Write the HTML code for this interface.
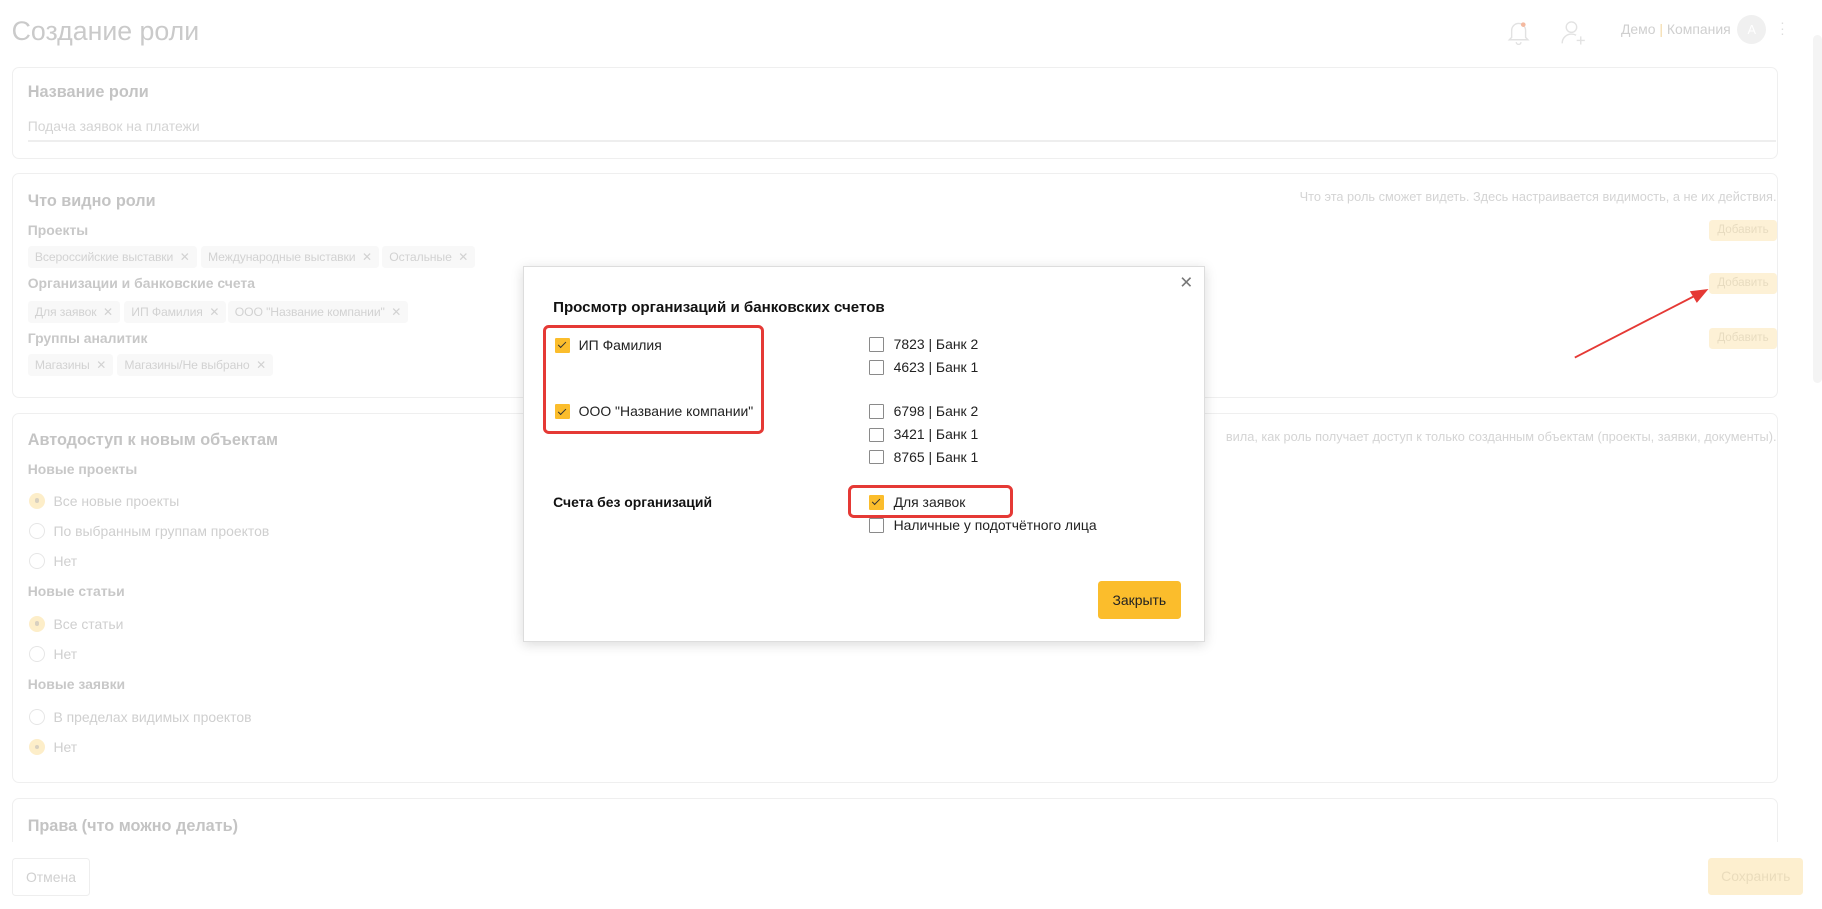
<!DOCTYPE html>
<html><head><meta charset="utf-8"><style>
html,body{margin:0;padding:0;background:#fff;overflow:hidden}
body{width:1822px;height:909px}
#w{position:absolute;left:0;top:0;width:1568px;height:782px;zoom:1.16199;font-family:"Liberation Sans",sans-serif;color:#ccc;overflow:hidden}
.a{position:absolute;white-space:nowrap}
.card{position:absolute;left:10px;width:1518px;border:1px solid #efefef;border-radius:6px;background:#fff}
.h{font-weight:bold;font-size:14px;color:#c4c4c4}
.s{font-weight:bold;font-size:12px;color:#c8c8c8}
.chip{position:absolute;height:19px;background:#f8f8f8;border-radius:3px;font-size:10.5px;line-height:19px;color:#d2d2d2;padding:0 6px;letter-spacing:-0.1px}
.add{position:absolute;left:1471px;width:58px;height:18px;background:#fdf1d6;border-radius:3px;font-size:10px;line-height:18px;text-align:center;color:#e8dcc0}
.r{position:absolute;left:25px;width:12px;height:12px;border:1px solid #e6e6e6;border-radius:50%}
.r.on{background:#fdeec9;border-color:#fdeec9}
.r.on:after{content:"";position:absolute;left:4px;top:4px;width:4px;height:4px;border-radius:50%;background:#d8d0c0}
.rl{position:absolute;left:46px;font-size:12px;color:#cfcfcf}
.cb{position:absolute;width:11px;height:11px;border:1px solid #8a8a8a;border-radius:1px;background:#fff}
.cb.on{background:#fbbd2c;border-color:#fbbd2c}
.cb.on:after{content:"";position:absolute;left:3px;top:1px;width:3px;height:6px;border:solid #333;border-width:0 1.3px 1.3px 0;transform:rotate(45deg)}
.ml{position:absolute;font-size:12px;color:#222}
.red{position:absolute;border:3px solid #e53935;border-radius:5px}
</style></head><body><div id="w">
<div class="a" style="left:10px;top:14px;font-size:23px;color:#cacaca">Создание роли</div>
<svg class="a" style="left:1297px;top:17px" width="20" height="22" viewBox="0 0 20 22" fill="none" stroke="#e2e2e2" stroke-width="1.2"><path d="M4 15V9a6 6 0 0 1 12 0v6l2 2H2z"/><path d="M8 19a2 2 0 0 0 4 0"/><circle cx="14" cy="4" r="2" fill="#f4b9a0" stroke="none"/></svg>
<svg class="a" style="left:1343px;top:16px" width="22" height="24" viewBox="0 0 22 24" fill="none" stroke="#e2e2e2" stroke-width="1.2"><circle cx="9" cy="7" r="4.5"/><path d="M1 21c0-5 4-8 8-8 2 0 3 .4 4 1"/><path d="M17 15v7M13.5 18.5h7"/></svg>
<div class="a" style="left:1395px;top:18px;font-size:12px;color:#cfcfcf">Демо <span style="color:#f3d9a6">|</span> Компания</div>
<div class="a" style="left:1495px;top:13px;width:25px;height:25px;border-radius:50%;background:#f0f0f0;color:#fff;font-size:11px;line-height:25px;text-align:center">A</div>
<div class="a" style="left:1532px;top:17px;font-size:12px;line-height:5px;color:#ddd">·<br>·<br>·</div>
<div class="a" style="left:1560px;top:30px;width:8px;height:300px;background:#f4f4f4;border-radius:4px"></div>

<div class="card" style="top:58px;height:77px">
<div class="a h" style="left:13px;top:13px">Название роли</div>
<div class="a" style="left:13px;top:43px;font-size:12px;color:#d4d4d4">Подача заявок на платежи</div>
<div class="a" style="left:13px;top:62px;width:1505px;height:1px;background:#eee"></div>
</div>

<div class="card" style="top:149px;height:192px">
<div class="a h" style="left:13px;top:15px">Что видно роли</div>
<div class="a" style="right:0;top:13px;font-size:11px;color:#d4d4d4">Что эта роль сможет видеть. Здесь настраивается видимость, а не их действия.</div>
<div class="a s" style="left:13px;top:41px">Проекты</div>
<div class="a s" style="left:13px;top:87px">Организации и банковские счета</div>
<div class="a s" style="left:13px;top:134px">Группы аналитик</div>
</div>
<div class="chip" style="left:24px;top:212px">Всероссийские выставки&nbsp; ✕</div>
<div class="chip" style="left:173px;top:212px">Международные выставки&nbsp; ✕</div>
<div class="chip" style="left:329px;top:212px">Остальные&nbsp; ✕</div>
<div class="chip" style="left:24px;top:259px">Для заявок&nbsp; ✕</div>
<div class="chip" style="left:107px;top:259px">ИП Фамилия&nbsp; ✕</div>
<div class="chip" style="left:196px;top:259px">ООО "Название компании"&nbsp; ✕</div>
<div class="chip" style="left:24px;top:305px">Магазины&nbsp; ✕</div>
<div class="chip" style="left:101px;top:305px">Магазины/Не выбрано&nbsp; ✕</div>
<div class="add" style="top:189px">Добавить</div>
<div class="add" style="top:235px">Добавить</div>
<div class="add" style="top:282px">Добавить</div>

<div class="card" style="top:355px;height:317px">
<div class="a h" style="left:13px;top:15px">Автодоступ к новым объектам</div>
<div class="a" style="right:0;top:13px;font-size:11px;color:#d4d4d4">вила, как роль получает доступ к только созданным объектам (проекты, заявки, документы).</div>
<div class="a s" style="left:13px;top:41px">Новые проекты</div>
<div class="a s" style="left:13px;top:146px">Новые статьи</div>
<div class="a s" style="left:13px;top:226px">Новые заявки</div>
</div>
<div class="r on" style="top:424px"></div><div class="rl" style="top:424px">Все новые проекты</div>
<div class="r" style="top:450px"></div><div class="rl" style="top:450px">По выбранным группам проектов</div>
<div class="r" style="top:476px"></div><div class="rl" style="top:476px">Нет</div>
<div class="r on" style="top:530px"></div><div class="rl" style="top:530px">Все статьи</div>
<div class="r" style="top:556px"></div><div class="rl" style="top:556px">Нет</div>
<div class="r" style="top:610px"></div><div class="rl" style="top:610px">В пределах видимых проектов</div>
<div class="r on" style="top:636px"></div><div class="rl" style="top:636px">Нет</div>

<div class="card" style="top:687px;height:80px">
<div class="a h" style="left:13px;top:15px">Права (что можно делать)</div>
</div>
<div class="a" style="left:0;top:725px;width:1560px;height:60px;background:#fff"></div>
<div class="a" style="left:10px;top:738px;width:66px;height:31px;border:1px solid #eee;border-radius:3px;font-size:12px;line-height:31px;text-align:center;color:#d0d0d0">Отмена</div>
<div class="a" style="left:1470px;top:738px;width:82px;height:32px;background:#fdefcf;border-radius:3px;font-size:12px;line-height:32px;text-align:center;color:#eadcbc">Сохранить</div>

<svg class="a" style="left:1350px;top:243px" width="125" height="70"><line x1="5" y1="65" x2="112" y2="10" stroke="#e53935" stroke-width="1.6"/><path d="M120 6 L104 8 L110 18 Z" fill="#e53935"/></svg>

<div class="a" style="left:450px;top:229px;width:585px;height:322px;background:#fff;border:1px solid #ddd;box-shadow:0 2px 10px rgba(0,0,0,.15)"></div>
<div class="a" style="left:1015px;top:235px;font-size:14px;color:#777">✕</div>
<div class="a" style="left:476px;top:257px;font-size:13px;font-weight:bold;color:#111">Просмотр организаций и банковских счетов</div>
<div class="cb on" style="left:478px;top:291px"></div><div class="ml" style="left:498px;top:290px">ИП Фамилия</div>
<div class="cb on" style="left:478px;top:348px"></div><div class="ml" style="left:498px;top:347px">ООО "Название компании"</div>
<div class="red" style="left:467px;top:280px;width:185px;height:88px"></div>
<div class="cb" style="left:748px;top:290px"></div><div class="ml" style="left:769px;top:289px">7823 | Банк 2</div>
<div class="cb" style="left:748px;top:310px"></div><div class="ml" style="left:769px;top:309px">4623 | Банк 1</div>
<div class="cb" style="left:748px;top:348px"></div><div class="ml" style="left:769px;top:347px">6798 | Банк 2</div>
<div class="cb" style="left:748px;top:368px"></div><div class="ml" style="left:769px;top:367px">3421 | Банк 1</div>
<div class="cb" style="left:748px;top:387px"></div><div class="ml" style="left:769px;top:386px">8765 | Банк 1</div>
<div class="a" style="left:476px;top:425px;font-size:12px;font-weight:bold;color:#111">Счета без организаций</div>
<div class="cb on" style="left:748px;top:426px"></div><div class="ml" style="left:769px;top:425px">Для заявок</div>
<div class="red" style="left:730px;top:417px;width:137px;height:24px"></div>
<div class="cb" style="left:748px;top:446px"></div><div class="ml" style="left:769px;top:445px">Наличные у подотчётного лица</div>
<div class="a" style="left:945px;top:500px;width:71px;height:33px;background:#fbbd2c;border-radius:3px;font-size:12px;line-height:33px;text-align:center;color:#222">Закрыть</div>
</div></body></html>
